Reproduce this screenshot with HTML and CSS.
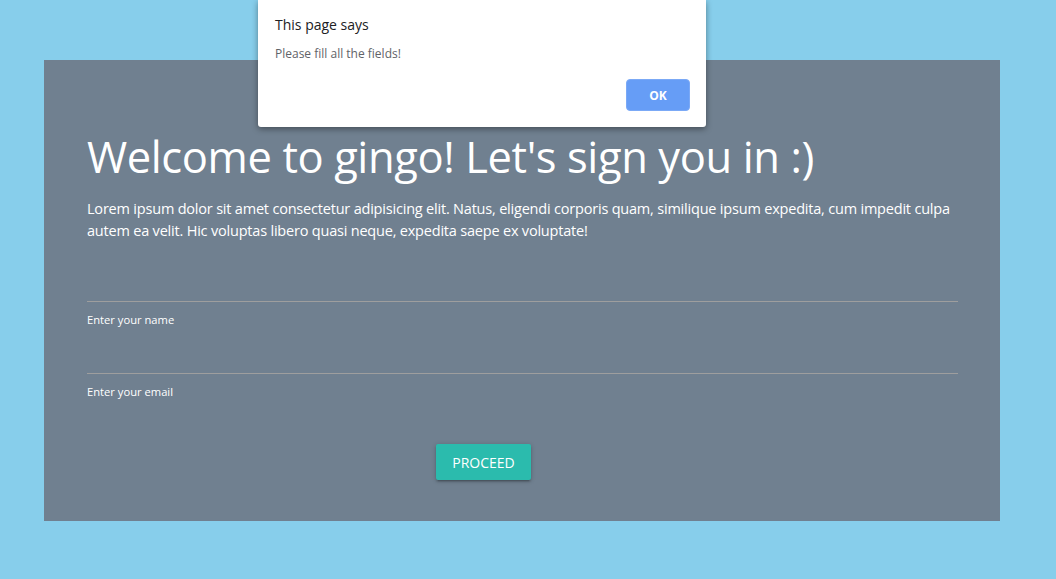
FILE: index.html
```html
<!DOCTYPE html>
<html lang="en">
<head>
<meta charset="utf-8">
<title>gingo - sign in</title>
<link rel="stylesheet" href="styles.css">
</head>
<body>
  <main class="panel">
    <h1 class="title">Welcome to gingo! Let's sign you in :)</h1>
    <p class="intro">Lorem ipsum dolor sit amet consectetur adipisicing elit. Natus, eligendi corporis quam, similique ipsum expedita, cum impedit culpa autem ea velit. Hic voluptas libero quasi neque, expedita saepe ex voluptate!</p>
    <form class="form">
      <div class="field">
        <input class="input" type="text" id="name">
        <label class="label" for="name">Enter your name</label>
      </div>
      <div class="field">
        <input class="input" type="email" id="email">
        <label class="label" for="email">Enter your email</label>
      </div>
      <div class="actions">
        <button class="btn" type="button">Proceed</button>
      </div>
    </form>
  </main>

  <div class="dialog" role="alertdialog">
    <div class="dialog-title">This page says</div>
    <div class="dialog-msg">Please fill all the fields!</div>
    <div class="dialog-actions">
      <button class="dialog-ok" type="button">OK</button>
    </div>
  </div>
</body>
</html>
```

FILE: styles.css
```css
html, body {
  margin: 0;
  padding: 0;
}
body {
  background: #87ceeb;
  font-family: "Segoe UI", "Open Sans", "Noto Sans", sans-serif;
  color: #fff;
  min-height: 579px;
  padding-top: 60px;
  box-sizing: border-box;
}
.panel {
  background: #708090;
  margin: 0 56px 0 44px;
  padding: 73px 42px 41px 43px;
  height: 461px;
  box-sizing: border-box;
}
.title {
  margin: 0;
  font-weight: 400;
  font-size: 43.5px;
  line-height: 48px;
  letter-spacing: -0.4px;
}
.intro {
  margin: 17px 0 0;
  font-size: 14.5px;
  line-height: 22px;
  letter-spacing: -0.2px;
}
.form {
  margin-top: 14px;
}
.field {
  display: flex;
  flex-direction: column;
}
.input {
  height: 45px;
  border: none;
  border-bottom: 1px solid #9e9e9e;
  background: transparent;
  padding: 0;
  outline: none;
}
.label {
  font-size: 11.2px;
  line-height: 16px;
  margin-top: 10px;
}
.actions {
  display: flex;
  justify-content: center;
  margin-top: 44px;
}
.btn {
  background: #2bbbad;
  color: #fff;
  border: none;
  border-radius: 2px;
  height: 36px;
  padding: 0 16px;
  font-family: inherit;
  font-size: 14px;
  text-transform: uppercase;
  box-shadow: 0 2px 2px rgba(0,0,0,0.14), 0 3px 1px -2px rgba(0,0,0,0.12), 0 1px 5px rgba(0,0,0,0.2);
  margin-right: 78px;
}
.dialog {
  position: absolute;
  left: 258px;
  top: 0;
  width: 448px;
  height: 127px;
  box-sizing: border-box;
  background: #fff;
  border-radius: 0 0 3px 3px;
  box-shadow: 0 2px 6px rgba(0,0,0,0.4);
  padding: 15px 16px 16px 17px;
  color: #202124;
}
.dialog-title {
  font-size: 14px;
  line-height: 20px;
}
.dialog-msg {
  margin-top: 11px;
  font-size: 12px;
  line-height: 16px;
  color: #5f6368;
}
.dialog-actions {
  display: flex;
  justify-content: flex-end;
  margin-top: 17px;
}
.dialog-ok {
  width: 64px;
  height: 32px;
  background: #669df6;
  color: #fff;
  border: 1px solid #7ba9f6;
  border-radius: 4px;
  font-family: inherit;
  font-size: 12px;
  font-weight: 700;
}
```
